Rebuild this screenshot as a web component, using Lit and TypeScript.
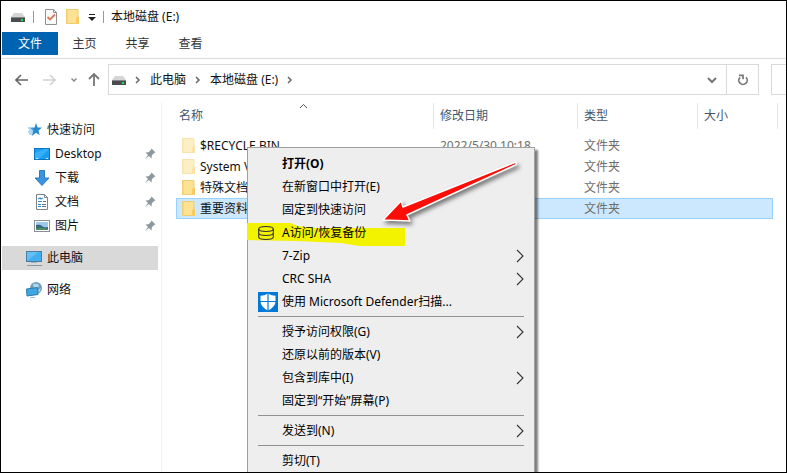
import { LitElement, html, css, nothing } from "lit";
import { customElement, property } from "lit/decorators.js";

const drive = html`<svg width="14" height="12" viewBox="0 0 14 12" aria-hidden="true">
  <path d="M3 2h8l3 4H0z" fill="#d3d5d6" />
  <rect y="6" width="14" height="5" fill="#4a4d50" />
  <rect y="6" width="14" height="1" fill="#85888a" />
  <rect x="10" y="8" width="2" height="2" fill="#25e04a" />
</svg>`;

const folder = (faded = false) => html`<svg width="14" height="17" viewBox="0 0 14 17" opacity=${faded ? 0.55 : 1} aria-hidden="true">
  <path d="M0 1h12v15H0z" fill="#fde293" />
  <path d="M0 1h2v15H0z" fill="#fbd97a" />
  <path d="M10 16v-5l1.500-3L13 9v7z" fill="#f6cb62" />
  <path d="M12 8.500V1.500H.5v14H10.500" fill="none" stroke="#f0cd70" />
</svg>`;

const star = html`<svg width="14" height="14" viewBox="0 0 14 14" aria-hidden="true">
  <path d="M8 0l1.600 4.400 4.400.2-3.500 2.900 1.200 4.800L8 9.800 3.800 13l1.300-5L2.500 5l4-.6z" fill="#2689cf" />
  <path d="M0 5h5M1 7h5M0 9h5M1 11h3" stroke="#63b3e6" />
</svg>`;

const desktop = html`<svg width="16" height="14" viewBox="0 0 16 14" aria-hidden="true">
  <rect x=".5" y="1.500" width="15" height="11" fill="#1a9df0" stroke="#0b76c4" />
  <path d="M1 12V6l10-4h4L5 12z" fill="#38b0f8" />
  <path d="M2 11.500h2M12 11.500h2" stroke="#cfeaff" />
</svg>`;

const download = html`<svg width="16" height="16" viewBox="0 0 16 16" aria-hidden="true">
  <path d="M5.500.5h5V8h4.500L8 15.500 1 8h4.500z" fill="#3b93df" stroke="#2a7cc6" />
</svg>`;

const documentIcon = html`<svg width="16" height="16" viewBox="0 0 16 16" aria-hidden="true">
  <path d="M2.500.5h8l3 3v12h-11z" fill="#fff" stroke="#7d8488" />
  <path d="M10.500.5v3h3" fill="none" stroke="#7d8488" />
  <path d="M4 5l2-1 1 1 2-1M4 7.500h4M4 10.500h3M4 12.500h3" fill="none" stroke="#3390d4" stroke-width="1.200" />
  <path d="M9 7.500h3M8 10.500h4M8 12.500h4" stroke="#5f7482" />
</svg>`;

const picture = html`<svg width="16" height="14" viewBox="0 0 16 14" aria-hidden="true">
  <rect x=".5" y="1.500" width="15" height="11" fill="#fff" stroke="#8b8f92" />
  <rect x="2" y="3" width="12" height="8" fill="#9fc9ea" />
  <path d="M2 6q4-1 6 1t6 1v3H2z" fill="#38667f" />
  <path d="M2 9q6-1 12 1v1H2z" fill="#4e8b62" />
</svg>`;

const computer = html`<svg width="16" height="16" viewBox="0 0 16 16" aria-hidden="true">
  <rect x=".5" y="1.500" width="15" height="10" fill="#42aef0" stroke="#4b7e9f" />
  <path d="M1 11V2h11z" fill="#7accf8" opacity=".6" />
  <path d="M5 12.500h6" stroke="#9fb4c0" />
  <path d="M1 15.500h15" stroke="#8497a3" />
</svg>`;

const network = html`<svg width="16" height="16" viewBox="0 0 16 16" aria-hidden="true">
  <circle cx="10" cy="6" r="6" fill="#6b9fbd" />
  <path d="M7 2q4-1 6 1l-1 3-4 1zM12 8l3-2-2 5z" fill="#b3d8ea" />
  <path d="M.5 7l11-1.500.5 7-11 1.500z" fill="#3ea6e2" stroke="#2f7ba8" />
  <path d="M4 15.500h5" stroke="#8fc3e0" />
</svg>`;

const pin = html`<svg class="pin" width="12" height="12" viewBox="0 0 12 12" aria-hidden="true">
  <path d="M7.500.5l4 4-1.500.5-2.200 2.400-.3 3L4.900 8 .8 11.300 4 7.100 1.500 4.500l3-.3L6.900 2z" fill="#8d979e" />
</svg>`;

const chevron = html`<svg class="crumb-arrow" width="6" height="8" viewBox="0 0 6 8" aria-hidden="true">
  <path d="M1 1l3 3-3 3" fill="none" stroke="#666" stroke-width="1.500" />
</svg>`;

const cylinder = html`<svg width="20" height="20" viewBox="0 0 20 20" fill="none" stroke="#333" stroke-width="1.100" aria-hidden="true">
  <ellipse cx="8" cy="6" rx="7.300" ry="2.500" />
  <path d="M.7 6v8c0 1.400 3.200 2.500 7.300 2.500s7.300-1.100 7.300-2.500V6M.7 10c0 1.400 3.200 2.500 7.300 2.500s7.300-1.100 7.300-2.500" />
</svg>`;

const shield = html`<svg width="20" height="20" viewBox="0 0 20 20" aria-hidden="true">
  <rect width="20" height="20" fill="#0078d7" />
  <path d="M10 1.500q3.500 2.200 7.500 2.200V9q0 6-7.500 9.500Q2.500 15 2.500 9V3.700q4 0 7.500-2.200z" fill="#fff" />
  <path d="M10 1v18M2 9.500h16" stroke="#0078d7" stroke-width="1.200" />
</svg>`;

const places = [
  { label: "快速访问", icon: star },
  { label: "Desktop", icon: desktop, child: true },
  { label: "下载", icon: download, child: true },
  { label: "文档", icon: documentIcon, child: true },
  { label: "图片", icon: picture, child: true },
  { label: "此电脑", icon: computer, root: true, current: true },
  { label: "网络", icon: network, root: true },
];

const files = [
  { name: "$RECYCLE.BIN", date: "2022/5/30 10:18", faded: true },
  { name: "System V", date: "", faded: true },
  { name: "特殊文档", date: "" },
  { name: "重要资料", date: "", selected: true },
];

type Entry = { label: string; icon?: unknown; sub?: boolean; bold?: boolean; marked?: boolean } | null;

const entries: Entry[] = [
  { label: "打开(O)", bold: true },
  { label: "在新窗口中打开(E)" },
  { label: "固定到快速访问" },
  { label: "A访问/恢复备份", icon: cylinder, marked: true },
  { label: "7-Zip", sub: true },
  { label: "CRC SHA", sub: true },
  { label: "使用 Microsoft Defender扫描...", icon: shield },
  null,
  { label: "授予访问权限(G)", sub: true },
  { label: "还原以前的版本(V)" },
  { label: "包含到库中(I)", sub: true },
  { label: "固定到“开始”屏幕(P)" },
  null,
  { label: "发送到(N)", sub: true },
  null,
  { label: "剪切(T)" },
];

const reset = css`
  * { box-sizing: border-box; }
  button, input {
    font: inherit; color: inherit; background: none; border: 0; padding: 0; margin: 0; text-align: left;
  }
  svg { display: block; flex: none; }
`;

@customElement("context-menu")
export class ContextMenu extends LitElement {
  @property({ attribute: false }) entries: Entry[] = [];

  static styles = [reset, css`
    :host {
      display: block; background: #eee; border: 1px solid #a0a0a0; padding: 4px 10px;
      box-shadow: 3px 3px 2px rgba(0, 0, 0, 0.5); color: #000;
    }
    .item { position: relative; display: flex; align-items: center; gap: 4px; width: 100%; height: 23px; white-space: nowrap; }
    .icon { width: 20px; height: 20px; flex: none; }
    .label { flex: 1; }
    .icon, .label { position: relative; z-index: 1; }
    .bold { font-weight: 700; }
    .line { height: 1px; margin: 3px 0; border: 0; background: #919191; }
    .mark { position: absolute; left: -11px; top: 1px; pointer-events: none; }
  `];

  render() {
    return html`<div role="menu">
      ${this.entries.map((e) => e === null
        ? html`<hr class="line" />`
        : html`<button class="item" role="menuitem">
            ${e.marked ? html`<svg class="mark" width="158" height="25" viewBox="0 0 158 25" aria-hidden="true">
              <path d="M0 1L44 1l6 3 20 2 88 0v18H112L94 21 50 19 0 18z" fill="#f3f300" />
            </svg>` : nothing}
            <span class="icon">${e.icon ?? nothing}</span>
            <span class="label ${e.bold ? "bold" : ""}">${e.label}</span>
            ${e.sub ? html`<svg width="8" height="14" viewBox="0 0 8 14" aria-hidden="true">
              <path d="M1 1l6 6-6 6" fill="none" stroke="#333" stroke-width="1.100" />
            </svg>` : nothing}
          </button>`)}
    </div>`;
  }
}

@customElement("app-root")
export class AppRoot extends LitElement {
  static styles = [reset, css`
    :host {
      display: block; font: 12px/16px "Noto Sans", "Noto Sans CJK SC", sans-serif; color: #111;
    }
    .window {
      position: relative; display: flex; flex-direction: column; height: 100vh;
      border: 1px solid #000; background: #fff; overflow: hidden;
    }
    .title { display: flex; align-items: center; height: 31px; padding-left: 10px; }
    .rule { width: 1px; height: 12px; background: #999; }
    .quick { display: flex; align-items: center; gap: 8px; padding: 0 7px 0 10px; }
    .title .rule:first-of-type { margin-left: 8px; }
    .caption { margin: 0 0 0 7px; font: inherit; }
    .ribbon { display: flex; height: 27px; border-bottom: 1px solid #dadbdc; padding-left: 1px; }
    .tab { width: 53px; height: 23px; text-align: center; color: #333; }
    .tab.primary { width: 56px; background: #0063b1; color: #fff; }
    .bar { display: flex; align-items: center; padding: 5px 0 0 14px; }
    .steps { display: flex; align-items: center; gap: 11px; width: 93px; }
    .step { width: 17px; }
    .address { display: flex; align-items: center; flex: 1; height: 31px; border: 1px solid #d9d9d9; padding-left: 3px; }
    .crumb { white-space: nowrap; }
    .crumb-arrow { margin: 0 9px; }
    .toggle { margin-left: auto; padding: 0 9px; }
    .refresh { display: flex; align-items: center; justify-content: center; width: 32px; height: 31px; border: 1px solid #d9d9d9; border-left: 0; }
    .search { width: 15px; height: 31px; margin-left: 12px; border: 1px solid #d9d9d9; border-right: 0; outline: 0; }
    .body { display: flex; flex: 1; min-height: 0; padding-top: 8px; }
    .side { width: 161px; border-right: 1px solid #f0f0f0; padding: 15px 3px 0 1px; flex: none; }
    .place { display: flex; align-items: center; gap: 5px; height: 24px; padding: 0 2px 0 24px; color: #111; text-decoration: none; }
    .place:first-child { padding-left: 26px; }
    .place.child { padding-left: 32px; }
    .place.root { margin-top: 8px; }
    .place.current { background: #d9d9d9; }
    .pin { margin-left: auto; }
    .main { flex: 1; padding-left: 14px; min-width: 0; overflow: hidden; }
    .files { table-layout: fixed; width: 602px; border-collapse: separate; border-spacing: 0; }
    .files th { position: relative; height: 26px; padding: 0; font-weight: 400; text-align: left; color: #43566e; }
    .files th + th { padding-left: 6px; }
    .files td { height: 21px; padding: 0 0 0 6px; color: #6d6d6d; white-space: nowrap; border: 0 solid #99d1ff; }
    .files .edge { border-right: 1px solid #e5e5e5; }
    .files .gap td { height: 6px; }
    .files .name { color: #111; }
    .files .selected td { background: #cce8ff; border-width: 1px 0; }
    .files .selected td:first-child { border-left-width: 1px; padding-left: 5px; }
    .files .selected .last { border-right-width: 1px; }
    .files .selected .end { background: none; border: 0; }
    .head { padding-left: 3px; }
    .file { display: flex; align-items: center; gap: 4px; overflow: hidden; }
    .c-name { width: 258px; }
    .c-date { width: 144px; }
    .c-type { width: 120px; }
    .c-size { width: 75px; }
    .sort { position: absolute; left: 123px; top: 0; }
    .menu { position: absolute; left: 246px; top: 146px; width: 288px; }
    .pointer { position: absolute; left: 374px; top: 149px; pointer-events: none; filter: drop-shadow(2px 3px 2px rgba(0, 0, 0, 0.5)); }
  `];

  render() {
    return html`<div class="window">
      <header class="title">
        ${drive}<span class="rule"></span>
        <div class="quick">
          <svg width="14" height="16" viewBox="0 0 14 16" aria-hidden="true">
            <path d="M1.500.5h8l3 3v12h-11z" fill="#fafafa" stroke="#909090" />
            <path d="M9.500.5v3h3" fill="none" stroke="#909090" />
            <path d="M3.500 8l2.500 2.500L11 5.500" fill="none" stroke="#d97b58" stroke-width="1.800" />
          </svg>
          ${folder()}
          <svg width="8" height="8" viewBox="0 0 8 8" aria-hidden="true">
            <path d="M1 1.500h6" stroke="#222" /><path d="M0 4h8L4 8z" fill="#222" />
          </svg>
        </div>
        <span class="rule"></span>
        <h1 class="caption">本地磁盘 (E:)</h1>
      </header>

      <nav class="ribbon">
        <button class="tab primary">文件</button>
        <button class="tab">主页</button>
        <button class="tab">共享</button>
        <button class="tab">查看</button>
      </nav>

      <div class="bar">
        <div class="steps">
          <button class="step" aria-label="后退"><svg width="13" height="12" viewBox="0 0 13 12" fill="none" stroke="#666" stroke-width="1.600"><path d="M13 6H1M6 1L1 6l5 5" /></svg></button>
          <button class="step" aria-label="前进"><svg width="13" height="12" viewBox="0 0 13 12" fill="none" stroke="#d2d2d2" stroke-width="1.600"><path d="M0 6h12M7 1l5 5-5 5" /></svg></button>
          <button aria-label="最近位置"><svg width="6" height="6" viewBox="0 0 6 6" fill="none" stroke="#888" stroke-width="1.500"><path d="M.5 1.500L3 4l2.500-2.500" /></svg></button>
          <button aria-label="向上"><svg width="12" height="13" viewBox="0 0 12 13" fill="none" stroke="#777" stroke-width="1.800"><path d="M6 13V1M1 6l5-5 5 5" /></svg></button>
        </div>
        <div class="address">
          ${drive}${chevron}
          <button class="crumb">此电脑</button>${chevron}
          <button class="crumb">本地磁盘 (E:)</button>${chevron}
          <button class="toggle" aria-label="历史记录"><svg width="10" height="8" viewBox="0 0 10 8" fill="none" stroke="#777" stroke-width="2"><path d="M1 2l4 4 4-4" /></svg></button>
        </div>
        <button class="refresh" aria-label="刷新"><svg width="12" height="12" viewBox="0 0 12 12" fill="none" stroke="#777" stroke-width="1.700"><path d="M9 3.300A4.200 4.200 0 1 1 3 3.300M2 1.300h4v4" /></svg></button>
        <input class="search" type="text" aria-label="搜索" />
      </div>

      <div class="body">
        <nav class="side">
          ${places.map((p) => html`<a href="#" class="place ${p.child ? "child" : ""} ${p.root ? "root" : ""} ${p.current ? "current" : ""}">
            ${p.icon}<span>${p.label}</span>${p.child ? pin : nothing}
          </a>`)}
        </nav>
        <main class="main">
          <table class="files">
            <colgroup><col class="c-name" /><col class="c-date" /><col class="c-type" /><col class="c-size" /><col /></colgroup>
            <thead>
              <tr>
                <th class="edge"><span class="head">名称</span>
                  <svg class="sort" width="9" height="6" viewBox="0 0 9 6" aria-hidden="true"><path d="M1 5l3.500-3.500L8 5" fill="none" stroke="#555" /></svg>
                </th>
                <th class="edge">修改日期</th>
                <th class="edge">类型</th>
                <th>大小</th>
                <td class="edge"></td>
              </tr>
            </thead>
            <tbody>
              <tr class="gap"><td colspan="5"></td></tr>
              ${files.map((f) => html`<tr class=${f.selected ? "selected" : ""}>
                <td class="name"><div class="file">${folder(f.faded)}<span>${f.name}</span></div></td>
                <td>${f.date}</td>
                <td>文件夹</td>
                <td class="last"></td>
                <td class="end"></td>
              </tr>`)}
            </tbody>
          </table>
        </main>
      </div>

      <context-menu class="menu" .entries=${entries}></context-menu>
      <svg class="pointer" width="146" height="76" viewBox="0 0 146 76" aria-hidden="true">
        <path d="M8 70L26 51l2 6L141 12l.5 2.500L32 65l3 6z" fill="#fb0d08" stroke="#fff" stroke-width="1.500" stroke-linejoin="round" />
      </svg>
    </div>`;
  }
}
